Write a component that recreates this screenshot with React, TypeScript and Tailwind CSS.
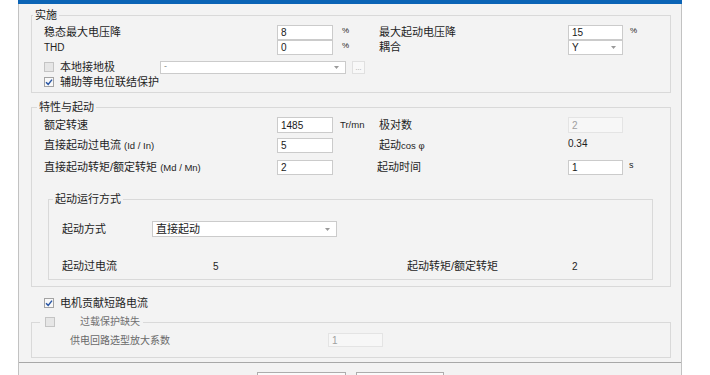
import type { ReactNode } from "react";
import { clsx as cn } from "clsx";

function Box({
  value,
  className,
  disabled = false,
}: {
  value: string;
  className?: string;
  disabled?: boolean;
}) {
  return (
    <div
      className={cn(
        "flex items-center pl-[3px] text-[10px] border",
        disabled
          ? "bg-[#f7f7f7] border-[#e4e4e4] text-[#a0a0a0]"
          : "bg-white border-[#cbcbcb] text-[#1a1a1a]",
        className,
      )}
    >
      {value}
    </div>
  );
}

function Dropdown({ value, className }: { value: string; className?: string }) {
  return (
    <div
      className={cn(
        "flex items-center justify-between pl-[3px] pr-[6px] bg-white border border-[#cbcbcb] text-[#1a1a1a]",
        className,
      )}
    >
      <span>{value}</span>
      <svg width="5" height="3" viewBox="0 0 5 3" aria-hidden="true">
        <path d="M0 0 L5 0 L2.5 3 Z" fill="#9a9a9a" />
      </svg>
    </div>
  );
}

function Check({ checked = false, muted = false }: { checked?: boolean; muted?: boolean }) {
  return (
    <span
      className={cn(
        "inline-flex w-[10px] h-[10px] shrink-0 items-center justify-center border",
        muted ? "bg-[#e6e6e6] border-[#c4c4c4]" : "bg-[#f8f8f8] border-[#a3a3a3]",
      )}
    >
      {checked && (
        <svg width="8" height="8" viewBox="0 0 8 8" aria-hidden="true">
          <path d="M1 4.2 L3.2 6.4 L7 1.6" fill="none" stroke="#2a57a5" strokeWidth="1.5" />
        </svg>
      )}
    </span>
  );
}

function Latin({ children }: { children: ReactNode }) {
  return <span className="text-[9.5px]">{children}</span>;
}

export default function App() {
  return (
    <div className="w-[710px] h-[375px] overflow-hidden bg-white font-['Liberation_Sans','Noto_Sans_CJK_SC',sans-serif] text-[11px] text-[#1e1e1e]">
      <div className="ml-[18px] w-[664px] h-full flex flex-col">
        <div className="h-[4px] shrink-0 bg-[#0b64b6]" />
        <div className="flex-1 shrink-0 flex flex-col bg-[#f3f3f3] border-x border-[#c2c2c2]">
          <div className="pl-[12px] pr-[10px]">
            {/* 实施 */}
            <fieldset className="mt-[5px] border border-[#d9d9d9]">
              <legend className="ml-[1px] px-[2px] leading-[12px]">实施</legend>
              <div className="pl-[12px] pt-[4px] pb-[3px]">
                <div className="flex h-[15px] items-center">
                  <span className="w-[233px]">稳态最大电压降</span>
                  <Box value="8" className="w-[56px] h-[15px]" />
                  <span className="w-[46px] pl-[9px] text-[8px] self-start">%</span>
                  <span className="w-[189px]">最大起动电压降</span>
                  <Box value="15" className="w-[55px] h-[15px]" />
                  <span className="pl-[7px] text-[8px] self-start">%</span>
                </div>
                <div className="flex h-[15px] items-center">
                  <span className="w-[233px] text-[10px]">THD</span>
                  <Box value="0" className="w-[56px] h-[15px]" />
                  <span className="w-[46px] pl-[9px] text-[8px] self-start">%</span>
                  <span className="w-[189px]">耦合</span>
                  <Dropdown value="Y" className="w-[55px] h-[15px] text-[10px]" />
                </div>
                <div className="mt-[5px] flex h-[14px] items-center">
                  <div className="w-[116px] flex items-center gap-[6px]">
                    <Check muted />
                    <span>本地接地极</span>
                  </div>
                  <Dropdown value="-" className="w-[186px] h-[13px] text-[9px] text-[#888]" />
                  <span className="ml-[6px] w-[13px] h-[13px] flex items-center justify-center border border-[#e0e0e0] bg-[#f8f8f8] text-[7px] text-[#999] leading-none">
                    ...
                  </span>
                </div>
                <div className="mt-[1px] flex h-[14px] items-center gap-[6px]">
                  <Check checked />
                  <span>辅助等电位联结保护</span>
                </div>
              </div>
            </fieldset>

            {/* 特性与起动 */}
            <fieldset className="mt-[8px] border border-[#d9d9d9] pb-[6px]">
              <legend className="ml-[5px] px-[2px] leading-[12px]">特性与起动</legend>
              <div className="pl-[12px] pt-[4px]">
                <div className="flex h-[16px] items-center">
                  <span className="w-[233px]">额定转速</span>
                  <Box value="1485" className="w-[56px] h-[16px]" />
                  <span className="w-[46px] pl-[7px] text-[9.5px]">Tr/mn</span>
                  <span className="w-[189px]">极对数</span>
                  <Box value="2" disabled className="w-[55px] h-[16px]" />
                </div>
                <div className="mt-[5px] flex h-[15px] items-center">
                  <span className="w-[233px]">
                    直接起动过电流 <Latin>(Id / In)</Latin>
                  </span>
                  <Box value="5" className="w-[56px] h-[15px]" />
                  <span className="w-[46px]" />
                  <span className="w-[189px]">
                    起动<Latin>cos φ</Latin>
                  </span>
                  <span className="text-[10px] -mt-[4px]">0.34</span>
                </div>
                <div className="mt-[7px] flex h-[15px] items-center">
                  <span className="w-[233px]">
                    直接起动转矩/额定转矩 <Latin>(Md / Mn)</Latin>
                  </span>
                  <Box value="2" className="w-[56px] h-[15px]" />
                  <span className="w-[44px]" />
                  <span className="w-[191px]">起动时间</span>
                  <Box value="1" className="w-[55px] h-[15px]" />
                  <span className="pl-[6px] text-[9px] -mt-[3px]">s</span>
                </div>
              </div>

              {/* 起动运行方式 */}
              <fieldset className="mt-[18px] ml-[16px] mr-[17px] border border-[#d9d9d9] pb-[6px]">
                <legend className="ml-[4px] px-[2px] leading-[12px]">起动运行方式</legend>
                <div className="pl-[13px]">
                  <div className="mt-[16px] flex h-[16px] items-center">
                    <span className="w-[90px]">起动方式</span>
                    <Dropdown value="直接起动" className="w-[185px] h-[16px]" />
                  </div>
                  <div className="mt-[22px] flex h-[14px] items-center">
                    <span className="w-[151px]">起动过电流</span>
                    <span className="w-[194px] text-[10px]">5</span>
                    <span className="w-[165px]">起动转矩/额定转矩</span>
                    <span className="text-[10px]">2</span>
                  </div>
                </div>
              </fieldset>
            </fieldset>

            <div className="mt-[9px] pl-[13px] flex h-[14px] items-center gap-[6px]">
              <Check checked />
              <span>电机贡献短路电流</span>
            </div>

            {/* 过载保护缺失 */}
            <fieldset className="mt-[6px] border border-[#d9d9d9] pb-[10px]">
              <legend className="ml-[8px] pl-[5px] pr-[3px] leading-[12px]">
                <span className="flex items-center">
                  <Check muted />
                  <span className="ml-[25px] text-[10px] text-[#707070]">过载保护缺失</span>
                </span>
              </legend>
              <div className="mt-[5px] pl-[38px] flex h-[14px] items-center">
                <span className="w-[258px] text-[10px] text-[#6a6a6a]">供电回路选型放大系数</span>
                <Box value="1" disabled className="w-[55px] h-[14px] text-[8px]" />
              </div>
            </fieldset>
          </div>

          {/* footer */}
          <div className="mt-[4px] flex-1 border-t border-[#a8a8a8] pt-[9px] pl-[238px] flex gap-[10px]">
            <div className="w-[89px] h-[24px] border border-[#adadad] bg-[#fbfbfb]" />
            <div className="w-[88px] h-[24px] border border-[#adadad] bg-[#fbfbfb]" />
          </div>
        </div>
      </div>
    </div>
  );
}
